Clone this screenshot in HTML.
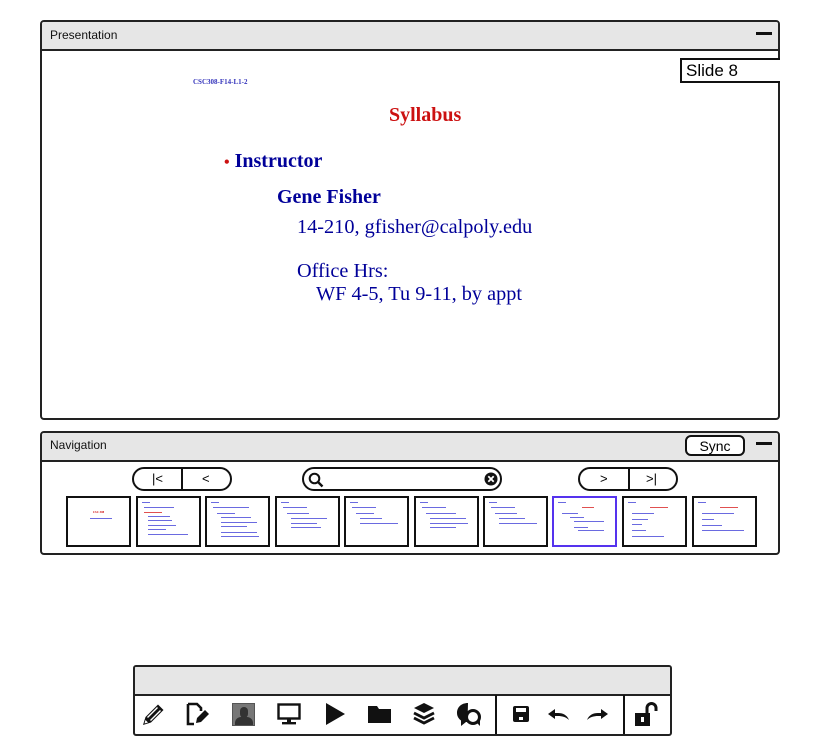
<!DOCTYPE html>
<html><head><meta charset="utf-8"><style>
*{box-sizing:border-box;margin:0;padding:0}
body{width:825px;height:750px;background:#fff;position:relative;overflow:hidden;font-family:"Liberation Sans",sans-serif}
.panel{position:absolute;border:2px solid #222;border-radius:4px;background:#fff;overflow:hidden}
.hdr{position:absolute;left:0;top:0;right:0;background:#e6e6e6;border-bottom:2px solid #222;font-size:12px;color:#111;padding-left:8px}
.minus{position:absolute;width:16px;height:3px;background:#111}
.s{position:absolute;font-family:"Liberation Serif",serif;white-space:nowrap}
.btn{position:absolute;border:2px solid #111;border-radius:12px;background:#fff;font-size:13px}
.th{position:absolute;top:496px;width:65px;height:51px;border:2px solid #111;background:#fff;overflow:hidden}
.th i{position:absolute;height:1px;background:#6a6ae0;display:block}
.th b{position:absolute;height:1px;background:#e05050;display:block}
.ic{position:absolute;top:702px}
</style></head><body>

<div class="panel" style="left:40px;top:20px;width:740px;height:400px">
 <div class="hdr" style="height:29px;line-height:26px">Presentation</div>
 <div class="minus" style="left:714px;top:10px"></div>
</div>
<div style="position:absolute;left:680px;top:58px;width:100px;height:25px;border:2px solid #111;border-right:none;background:#fff;font-size:17px;line-height:22px;padding-left:4px">Slide 8</div>
<div class="s" style="left:193px;top:78px;font-size:7px;font-weight:bold;color:#3333bb">CSC308-F14-L1-2</div>
<div class="s" style="left:389px;top:104px;font-size:20px;font-weight:bold;color:#cc1111">Syllabus</div>
<div class="s" style="left:224px;top:150px;font-size:20px;font-weight:bold;color:#000099"><span style="color:#cc1111;font-size:16px">•</span> Instructor</div>
<div class="s" style="left:277px;top:186px;font-size:20px;font-weight:bold;color:#000099">Gene Fisher</div>
<div class="s" style="left:297px;top:216px;font-size:20.3px;color:#000099">14-210, gfisher@calpoly.edu</div>
<div class="s" style="left:297px;top:260px;font-size:20.3px;color:#000099">Office Hrs:</div>
<div class="s" style="left:316px;top:283px;font-size:20.3px;color:#000099">WF 4-5, Tu 9-11, by appt</div>

<div class="panel" style="left:40px;top:431px;width:740px;height:124px">
 <div class="hdr" style="height:29px;line-height:25px">Navigation</div>
 <div class="minus" style="left:714px;top:9px"></div>
</div>
<div class="btn" style="left:685px;top:435px;width:60px;height:21px;border-radius:6px;text-align:center;line-height:18px;font-size:14px">Sync</div>

<div class="btn" style="left:132px;top:467px;width:100px;height:24px"><div style="position:absolute;left:47px;top:0;width:2px;height:20px;background:#111"></div><span style="position:absolute;left:18px;top:2px">|&lt;</span><span style="position:absolute;left:68px;top:2px">&lt;</span></div>
<div class="btn" style="left:302px;top:467px;width:200px;height:24px">
 <svg style="position:absolute;left:4px;top:3px" width="16" height="16" viewBox="0 0 16 16"><circle cx="6.5" cy="6.5" r="4.8" fill="none" stroke="#111" stroke-width="2"/><line x1="10" y1="10" x2="14.5" y2="14.5" stroke="#111" stroke-width="2.4"/></svg>
 <svg style="position:absolute;left:180px;top:3px" width="14" height="14" viewBox="0 0 14 14"><circle cx="7" cy="7" r="6.5" fill="#111"/><path d="M4.3 4.3L9.7 9.7M9.7 4.3L4.3 9.7" stroke="#fff" stroke-width="1.8"/></svg>
</div>
<div class="btn" style="left:578px;top:467px;width:100px;height:24px"><div style="position:absolute;left:48px;top:0;width:2px;height:20px;background:#111"></div><span style="position:absolute;left:20px;top:2px">&gt;</span><span style="position:absolute;left:66px;top:2px">&gt;|</span></div>

<div class="th" style="left:66px"><div style="position:absolute;left:0;right:0;top:12px;text-align:center;font:bold 3px 'Liberation Serif';color:#c00">CSC 308</div><i style="left:22px;top:20px;width:22px"></i></div>
<div class="th" style="left:136px"><i style="left:4px;top:4px;width:8px"></i><i style="left:6px;top:9px;width:30px"></i><b style="left:6px;top:14px;width:18px"></b><i style="left:10px;top:18px;width:22px"></i><i style="left:10px;top:22px;width:24px"></i><i style="left:10px;top:27px;width:28px"></i><i style="left:10px;top:31px;width:18px"></i><i style="left:10px;top:36px;width:40px"></i></div>
<div class="th" style="left:205px"><i style="left:4px;top:4px;width:8px"></i><i style="left:6px;top:9px;width:36px"></i><i style="left:10px;top:15px;width:18px"></i><i style="left:14px;top:19px;width:30px"></i><i style="left:14px;top:24px;width:36px"></i><i style="left:14px;top:28px;width:26px"></i><i style="left:14px;top:34px;width:36px"></i><i style="left:14px;top:38px;width:38px"></i></div>
<div class="th" style="left:275px"><i style="left:4px;top:4px;width:8px"></i><i style="left:6px;top:9px;width:24px"></i><i style="left:10px;top:15px;width:22px"></i><i style="left:14px;top:20px;width:36px"></i><i style="left:14px;top:25px;width:26px"></i><i style="left:14px;top:29px;width:30px"></i></div>
<div class="th" style="left:344px"><i style="left:4px;top:4px;width:8px"></i><i style="left:6px;top:9px;width:24px"></i><i style="left:10px;top:15px;width:18px"></i><i style="left:14px;top:20px;width:22px"></i><i style="left:14px;top:25px;width:38px"></i></div>
<div class="th" style="left:414px"><i style="left:4px;top:4px;width:8px"></i><i style="left:6px;top:9px;width:24px"></i><i style="left:10px;top:15px;width:30px"></i><i style="left:14px;top:20px;width:36px"></i><i style="left:14px;top:25px;width:38px"></i><i style="left:14px;top:29px;width:26px"></i></div>
<div class="th" style="left:483px"><i style="left:4px;top:4px;width:8px"></i><i style="left:6px;top:9px;width:24px"></i><i style="left:10px;top:15px;width:22px"></i><i style="left:14px;top:20px;width:26px"></i><i style="left:14px;top:25px;width:38px"></i></div>
<div class="th" style="left:552px;border-color:#5533ee"><i style="left:4px;top:4px;width:8px"></i><b style="left:28px;top:9px;width:12px"></b><i style="left:8px;top:15px;width:16px"></i><i style="left:16px;top:19px;width:14px"></i><i style="left:20px;top:23px;width:30px"></i><i style="left:20px;top:29px;width:14px"></i><i style="left:24px;top:32px;width:26px"></i></div>
<div class="th" style="left:622px"><i style="left:4px;top:4px;width:8px"></i><b style="left:26px;top:9px;width:18px"></b><i style="left:8px;top:15px;width:22px"></i><i style="left:8px;top:21px;width:16px"></i><i style="left:8px;top:26px;width:10px"></i><i style="left:8px;top:32px;width:14px"></i><i style="left:8px;top:38px;width:32px"></i></div>
<div class="th" style="left:692px"><i style="left:4px;top:4px;width:8px"></i><b style="left:26px;top:9px;width:18px"></b><i style="left:8px;top:15px;width:32px"></i><i style="left:8px;top:21px;width:12px"></i><i style="left:8px;top:27px;width:20px"></i><i style="left:8px;top:32px;width:42px"></i></div>

<div class="panel" style="left:133px;top:665px;width:539px;height:71px;border-radius:3px">
 <div class="hdr" style="height:29px"></div>
 <div style="position:absolute;left:360px;top:28px;width:2px;height:45px;background:#111"></div>
 <div style="position:absolute;left:488px;top:28px;width:2px;height:45px;background:#111"></div>
</div>

<svg class="ic" style="left:142px" width="24" height="24" viewBox="0 0 24 24"><path d="M1 23l2.5-8L16 2.5l5.5 5.5L9 20.5z" fill="#111"/><path d="M5.5 15.5l10-10M8.5 18.5l10-10" stroke="#fff" stroke-width="1.4"/><path d="M2.5 21.5l1-3.5 2.5 2.5z" fill="#fff"/></svg>
<svg class="ic" style="left:186px" width="24" height="24" viewBox="0 0 24 24"><path d="M2 2h9l4 4v3" fill="none" stroke="#111" stroke-width="2.6"/><path d="M2 2v20h6" fill="none" stroke="#111" stroke-width="2.6"/><path d="M10 21l1-5 8-8 4 4-8 8z" fill="#111"/></svg>
<div class="ic" style="left:232px;top:703px;width:23px;height:23px;background:#777;border:1px solid #555;overflow:hidden"><div style="position:absolute;left:7px;top:3px;width:8px;height:11px;border-radius:4px;background:#333"></div><div style="position:absolute;left:2px;top:13px;width:18px;height:12px;border-radius:6px 6px 0 0;background:#333"></div></div>
<svg class="ic" style="left:277px" width="24" height="24" viewBox="0 0 24 24"><rect x="1.5" y="2.5" width="21" height="14" fill="none" stroke="#111" stroke-width="2.4"/><rect x="10" y="17" width="4" height="3" fill="#111"/><rect x="5" y="20" width="14" height="2.4" fill="#111"/></svg>
<svg class="ic" style="left:323px" width="24" height="24" viewBox="0 0 24 24"><path d="M3 1l19 11-19 11z" fill="#111"/></svg>
<svg class="ic" style="left:367px" width="25" height="24" viewBox="0 0 25 24"><path d="M1 4h9l2 3h12v14H1z" fill="#111"/></svg>
<svg class="ic" style="left:412px" width="24" height="24" viewBox="0 0 24 24"><path d="M12 1l10 5-10 5-10-5z" fill="#111"/><path d="M2 11l10 5 10-5M2 16l10 5 10-5" fill="none" stroke="#111" stroke-width="2.8"/></svg>
<svg class="ic" style="left:456px" width="26" height="26" viewBox="0 0 26 26"><path d="M12 1C5 1 1 5.5 1 11c0 3.5 2 6 4 7.5V24l5-4c.5 0 1 0 1.5 0" fill="#111"/><circle cx="17" cy="15" r="6.5" fill="#fff" stroke="#111" stroke-width="3"/><path d="M20 20l4 4v-7z" fill="#111"/></svg>
<svg class="ic" style="left:512px" width="18" height="24" viewBox="0 0 18 24"><rect x="1" y="4" width="16" height="16" rx="2" fill="#111"/><rect x="4" y="6" width="10" height="4" fill="#fff"/><rect x="7" y="15" width="4" height="3" fill="#fff"/></svg>
<svg class="ic" style="left:546px" width="26" height="24" viewBox="0 0 26 24"><path d="M23 18c-2-5-6-7-11-7H9V7L2 12l7 5v-3h3c4 0 8 1 11 4z" fill="#111"/></svg>
<svg class="ic" style="left:584px" width="26" height="24" viewBox="0 0 26 24"><path d="M3 18c2-5 6-7 11-7h3V7l7 5-7 5v-3h-3c-4 0-8 1-11 4z" fill="#111"/></svg>
<svg class="ic" style="left:634px" width="26" height="26" viewBox="0 0 26 26"><rect x="1" y="11" width="15" height="13" fill="#111"/><path d="M13 11V6a4.5 4.5 0 0 1 9 0v3" fill="none" stroke="#111" stroke-width="3"/><rect x="7" y="15" width="3" height="5" fill="#fff"/></svg>
</body></html>
